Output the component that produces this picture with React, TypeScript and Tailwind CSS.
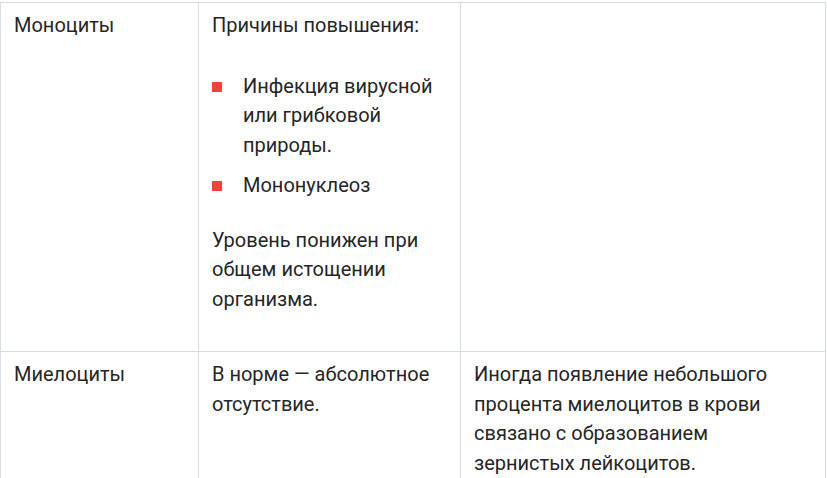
import React from "react";

const Bullet = ({ children }: { children: React.ReactNode }) => (
  <li className="flex items-start">
    <span className="mt-[10px] h-[10px] w-[10px] shrink-0 bg-[#f44336]" />
    <span className="ml-[21px]">{children}</span>
  </li>
);

export default function App() {
  return (
    <div
      className="h-[478px] w-[827px] overflow-hidden bg-white pt-[2px] text-[20px] leading-[29.5px] text-[#262626]"
      style={{ fontFamily: "Roboto, 'Liberation Sans', sans-serif" }}
    >
      <table className="w-[825px] table-fixed border-collapse">
        <colgroup>
          <col className="w-[198px]" />
          <col className="w-[262px]" />
          <col className="w-[365px]" />
        </colgroup>
        <tbody>
          <tr>
            <td className="border border-[#d5dce2] px-[13px] pt-[8px] pb-[8px] align-top">
              Моноциты
            </td>
            <td className="border border-[#d5dce2] px-[13px] pt-[8px] pb-[8px] align-top">
              <p>Причины повышения:</p>
              <ul className="mt-[31px] flex flex-col gap-[10.5px]">
                <Bullet>Инфекция вирусной или грибковой природы.</Bullet>
                <Bullet>Мононуклеоз</Bullet>
              </ul>
              <p className="mt-[25.5px] mb-[29px]">
                Уровень понижен при общем истощении организма.
              </p>
            </td>
            <td className="border border-[#d5dce2] px-[13px] pt-[8px] pb-[8px] align-top"></td>
          </tr>
          <tr>
            <td className="border border-[#d5dce2] px-[13px] pt-[8px] pb-[8px] align-top">
              Миелоциты
            </td>
            <td className="border border-[#d5dce2] px-[13px] pt-[8px] pb-[8px] align-top">
              <p>В норме — абсолютное отсутствие.</p>
            </td>
            <td className="border border-[#d5dce2] px-[13px] pt-[8px] pb-[8px] align-top">
              <p className="max-w-[305px]">
                Иногда появление небольшого процента миелоцитов в крови связано с
                образованием зернистых лейкоцитов.
              </p>
            </td>
          </tr>
        </tbody>
      </table>
    </div>
  );
}
